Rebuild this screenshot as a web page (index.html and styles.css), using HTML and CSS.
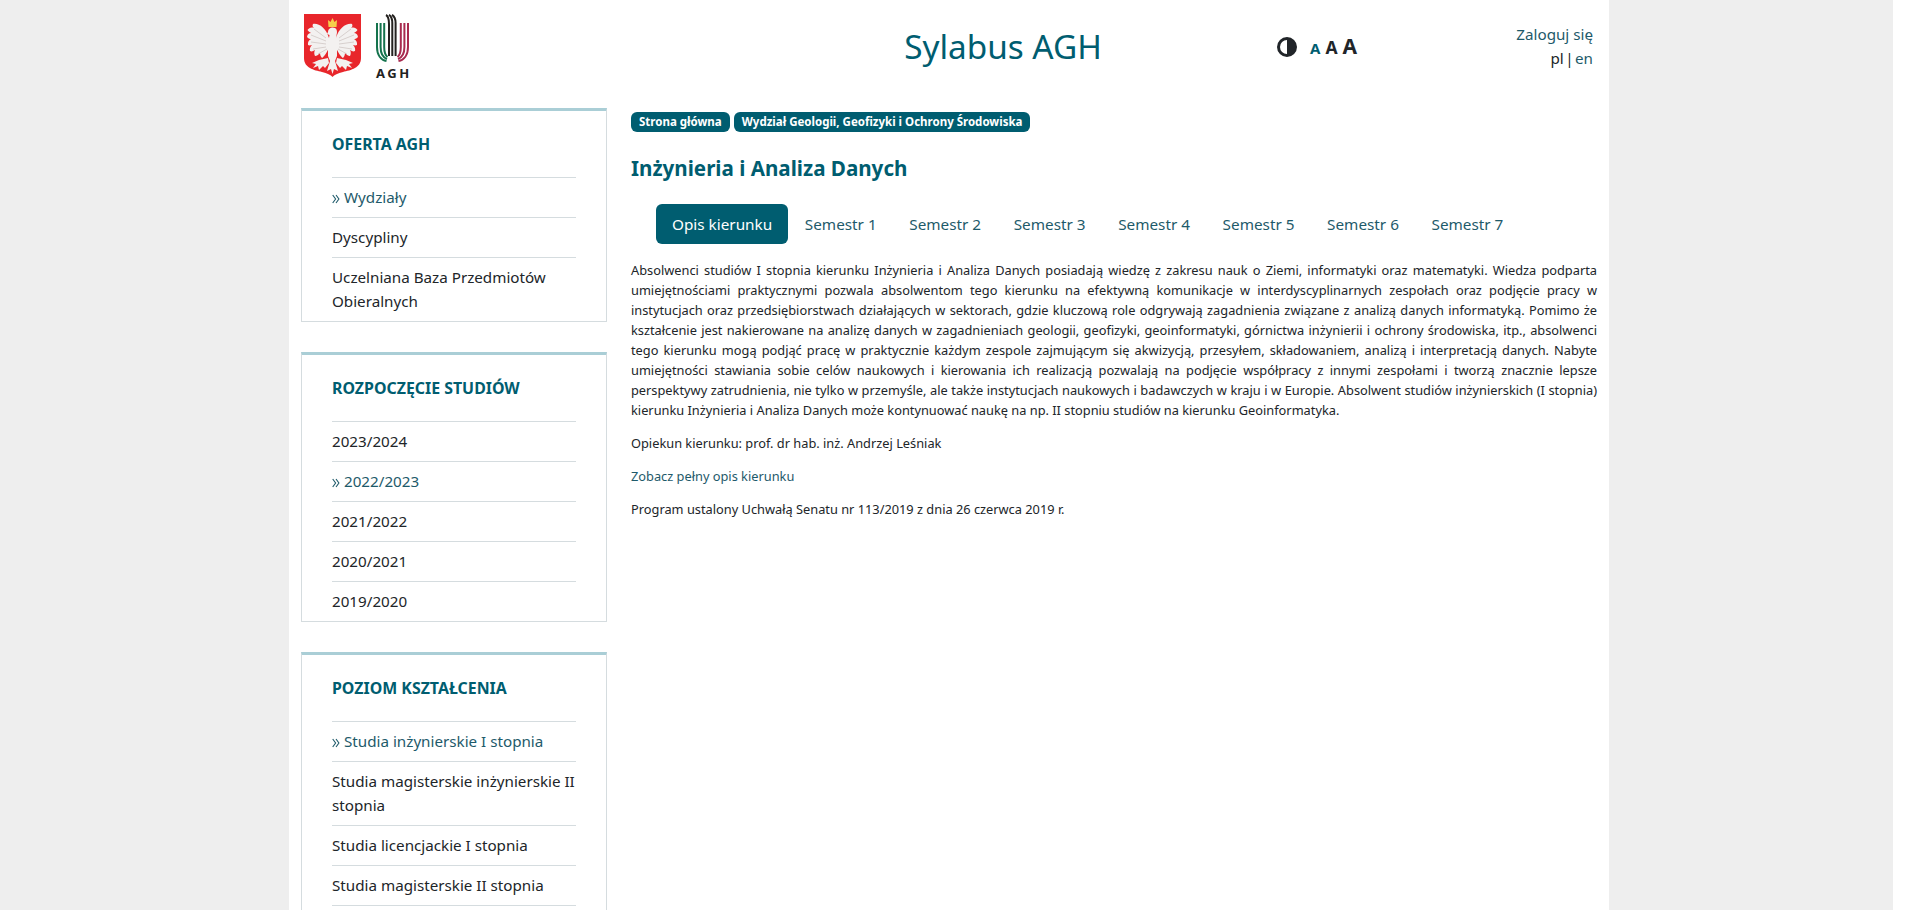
FILE: index.html
```html
<!DOCTYPE html>
<html lang="pl">
<head>
<meta charset="utf-8">
<title>Sylabus AGH</title>
<link rel="stylesheet" href="styles.css">
</head>
<body>
<div class="frame">
<div class="page">
  <header class="top">
    <div class="logos">
      <svg class="eagle" width="57" height="63" viewBox="0 0 57 63">
        <defs>
          <g id="half">
            <path d="M25 24C22 14 15 9 9 10C8 12 9 13 10 14C7 13 5 14 3.500 16C5 18 6 18 7 19C5 19 3.500 20 3 23C5 25 6 25 7 25C5 26 3.500 28 4 31C6 32 7 31 8 31C6 33 5.500 35 6 37C8 38 9 37 11 36C10 38 10 40 11 42C13 42 14 41 16 39C16 41 17 43 18 44C20 43 23 38 25 34Z" fill="#f3f1f0"/>
            <path d="M22 24L10 15M22 27L7 21M22 30L7 28M22 33L9 35M23 35L14 40" stroke="#cfc6c4" stroke-width=".8" fill="none"/>
            <path d="M24 44L15 46L8 49L12 50L9 54L14 52L15 56L19 52L21 54L25 49Z" fill="#f3f1f0"/>
          </g>
        </defs>
        <path d="M0 0H57V44C57 54 47 56 39 58C34 59 30 61 28.500 63C27 61 23 59 18 58C10 56 0 54 0 44Z" fill="#e8262b"/>
        <path d="M24 6L26.500 8L28.500 4L30.500 8L33 6L32.500 13H24.500Z" fill="#f6cf4a"/>
        <use href="#half"/>
        <use href="#half" transform="translate(57) scale(-1 1)"/>
        <path d="M24 18C24 14 28 12.500 31 14C33 15 33.500 18 32.500 21L33 30V42L31 47L34 57L30 55L28.500 60L27 55L23 57L26 47L24 42V30L25.500 21L23 20Z" fill="#f3f1f0"/>
      </svg>
      <div class="agh">
        <svg width="33" height="48" viewBox="0 0 33 48">
          <g fill="none" stroke-width="2">
            <g stroke="#14734d"><path d="M1 9V33C1 41 5 46 10.500 47"/><path d="M4.600 9V33C4.600 39 7 43.500 11 45"/><path d="M8.200 9V33C8.200 37 9 41 11.500 43"/></g>
            <g stroke="#24211f"><path d="M13 42V10C13 5 12 2 10 1"/><path d="M16.300 42V9C16.300 5 15 2 13 .8"/><path d="M19.600 42V9C19.600 5 18 2 16 .8"/></g>
            <g stroke="#a82a4e"><path d="M32 9V33C32 41 28 46 22.500 47"/><path d="M28.400 9V33C28.400 39 26 43.500 22 45"/><path d="M24.800 9V33C24.800 37 24 41 21.500 43"/></g>
          </g>
        </svg>
        <span class="agh-word">AGH</span>
      </div>
    </div>
    <h1 class="site-title">Sylabus AGH</h1>
    <div class="a11y">
      <svg class="contrast" width="20" height="20" viewBox="0 0 20 20"><circle cx="10" cy="10" r="8.500" fill="#fff" stroke="#212529" stroke-width="3"/><path d="M10 1.500a8.500 8.500 0 0 1 0 17z" fill="#212529"/></svg>
      <span class="a-s">A</span><span class="a-m">A</span><span class="a-l">A</span>
    </div>
    <div class="user">
      <a class="link" href="#">Zaloguj się</a>
      <div class="langs"><span>pl</span> | <a class="link" href="#">en</a></div>
    </div>
  </header>
  <div class="columns">
    <aside class="side">
      <section class="card">
        <h2>OFERTA AGH</h2>
        <ul>
          <li class="on"><svg class="chev" width="8" height="10" viewBox="0 0 8 10"><path d="M.7 1L3.600 5L.7 9M4 1L6.900 5L4 9"/></svg>Wydziały</li>
          <li>Dyscypliny</li>
          <li>Uczelniana Baza Przedmiotów Obieralnych</li>
        </ul>
      </section>
      <section class="card">
        <h2>ROZPOCZĘCIE STUDIÓW</h2>
        <ul>
          <li>2023/2024</li>
          <li class="on"><svg class="chev" width="8" height="10" viewBox="0 0 8 10"><path d="M.7 1L3.600 5L.7 9M4 1L6.900 5L4 9"/></svg>2022/2023</li>
          <li>2021/2022</li>
          <li>2020/2021</li>
          <li>2019/2020</li>
        </ul>
      </section>
      <section class="card">
        <h2>POZIOM KSZTAŁCENIA</h2>
        <ul>
          <li class="on"><svg class="chev" width="8" height="10" viewBox="0 0 8 10"><path d="M.7 1L3.600 5L.7 9M4 1L6.900 5L4 9"/></svg>Studia inżynierskie I stopnia</li>
          <li>Studia magisterskie inżynierskie II stopnia</li>
          <li>Studia licencjackie I stopnia</li>
          <li>Studia magisterskie II stopnia</li>
          <li class="blank"></li>
        </ul>
      </section>
    </aside>
    <main class="content">
      <nav class="crumbs"><a href="#">Strona główna</a><a href="#">Wydział Geologii, Geofizyki i Ochrony Środowiska</a></nav>
      <h3 class="title">Inżynieria i Analiza Danych</h3>
      <nav class="tabs">
        <a class="tab active" href="#">Opis kierunku</a>
        <a class="tab" href="#">Semestr 1</a>
        <a class="tab" href="#">Semestr 2</a>
        <a class="tab" href="#">Semestr 3</a>
        <a class="tab" href="#">Semestr 4</a>
        <a class="tab" href="#">Semestr 5</a>
        <a class="tab" href="#">Semestr 6</a>
        <a class="tab" href="#">Semestr 7</a>
      </nav>
      <p class="just">Absolwenci studiów I stopnia kierunku Inżynieria i Analiza Danych posiadają wiedzę z zakresu nauk o Ziemi, informatyki oraz matematyki. Wiedza podparta umiejętnościami praktycznymi pozwala absolwentom tego kierunku na efektywną komunikacje w interdyscyplinarnych zespołach oraz podjęcie pracy w instytucjach oraz przedsiębiorstwach działających w sektorach, gdzie kluczową role odgrywają zagadnienia związane z analizą danych informatyką. Pomimo że kształcenie jest nakierowane na analizę danych w zagadnieniach geologii, geofizyki, geoinformatyki, górnictwa inżynierii i ochrony środowiska, itp., absolwenci tego kierunku mogą podjąć pracę w praktycznie każdym zespole zajmującym się akwizycją, przesyłem, składowaniem, analizą i interpretacją danych. Nabyte umiejętności stawiania sobie celów naukowych i kierowania ich realizacją pozwalają na podjęcie współpracy z innymi zespołami i tworzą znacznie lepsze perspektywy zatrudnienia, nie tylko w przemyśle, ale także instytucjach naukowych i badawczych w kraju i w Europie. Absolwent studiów inżynierskich (I stopnia) kierunku Inżynieria i Analiza Danych może kontynuować naukę na np. II stopniu studiów na kierunku Geoinformatyka.</p>
      <p>Opiekun kierunku: prof. dr hab. inż. Andrzej Leśniak</p>
      <p><a class="link" href="#">Zobacz pełny opis kierunku</a></p>
      <p>Program ustalony Uchwałą Senatu nr 113/2019 z dnia 26 czerwca 2019 r.</p>
    </main>
  </div>
</div>
</div>
</body>
</html>
```
FILE: styles.css
```css
* { box-sizing: border-box; }
html, body { margin: 0; height: 100%; overflow: hidden; background: #fff; }
body { font-family: "Noto Sans", sans-serif; color: #212529; font-size: 15.200px; }
a { text-decoration: none; }
.link { color: #1e5a6a; }
.frame { width: 1893px; height: 910px; background: #eee; overflow: hidden; }
.page { width: 1320px; height: 910px; margin-left: 289px; background: #fff; padding: 0 12px; overflow: hidden; }
.top { display: flex; align-items: flex-start; height: 108px; }
.logos { display: flex; flex: none; width: 503px; padding: 14px 0 0 3px; gap: 15px; }
.agh { display: flex; flex-direction: column; align-items: flex-start; width: 33px; }
.agh svg { display: block; }
.agh-word { font-size: 13px; font-weight: 700; letter-spacing: 2.500px; color: #222; line-height: 14px; margin-top: 4px; }
.site-title { margin: 24px 0 0; flex: none; width: 398px; font-weight: 400; font-size: 33.300px; line-height: 44px; color: #005d70; text-align: center; }
.a11y { display: flex; align-items: baseline; flex: none; padding: 34px 0 0 75px; color: #212529; font-weight: 700; line-height: 24px; }
.contrast { align-self: center; margin-right: 13px; }
.a-s { font-size: 15px; color: #005d70; margin-right: 5px; }
.a-m { font-size: 17.500px; margin-right: 5px; }
.a-l { font-size: 21px; }
.user { margin-left: auto; text-align: right; padding: 22px 4px 0 0; line-height: 24px; }
.langs { word-spacing: -2.500px; }
.columns { display: flex; align-items: flex-start; }
.side { width: 306px; flex: none; display: flex; flex-direction: column; gap: 30px; }
.card { border: 1px solid #d5dcdf; border-top: 3px solid #aaced6; padding: 0 30px; }
.card h2 { margin: 0; height: 66px; padding-top: 21px; font-size: 15.900px; line-height: 24px; font-weight: 700; color: #005d70; }
.card ul { list-style: none; margin: 0; padding: 0; }
.card li { border-top: 1px solid #d5dcdf; padding: 6.500px 0 8.500px; line-height: 24px; }
.card li.on { color: #1e5a6a; }
.card li.blank { height: 40px; }
.chev { margin-right: 4px; vertical-align: -1px; fill: none; stroke: #1e5a6a; stroke-width: 1.100; }
.content { flex: 1; padding: 4px 0 0 24px; font-size: 12.800px; line-height: 20px; }
.crumbs { display: flex; gap: 4px; }
.crumbs a { background: #005d70; color: #fff; font-size: 11.500px; font-weight: 700; line-height: 20px; padding: 0 8px; border-radius: 6px; }
.title { margin: 21px 0 0; font-size: 20.600px; line-height: 30px; font-weight: 700; color: #005d70; }
.tabs { display: flex; gap: .6px; margin: 21px 0 0 25px; }
.tab { color: #1e5a6a; font-size: 15.300px; line-height: 24px; padding: 8px 16px; border-radius: 6px; }
.tab.active { background: #005d70; color: #fff; }
.content p { margin: 0 0 13px; }
.content .just { margin-top: 16px; text-align: justify; }
```
